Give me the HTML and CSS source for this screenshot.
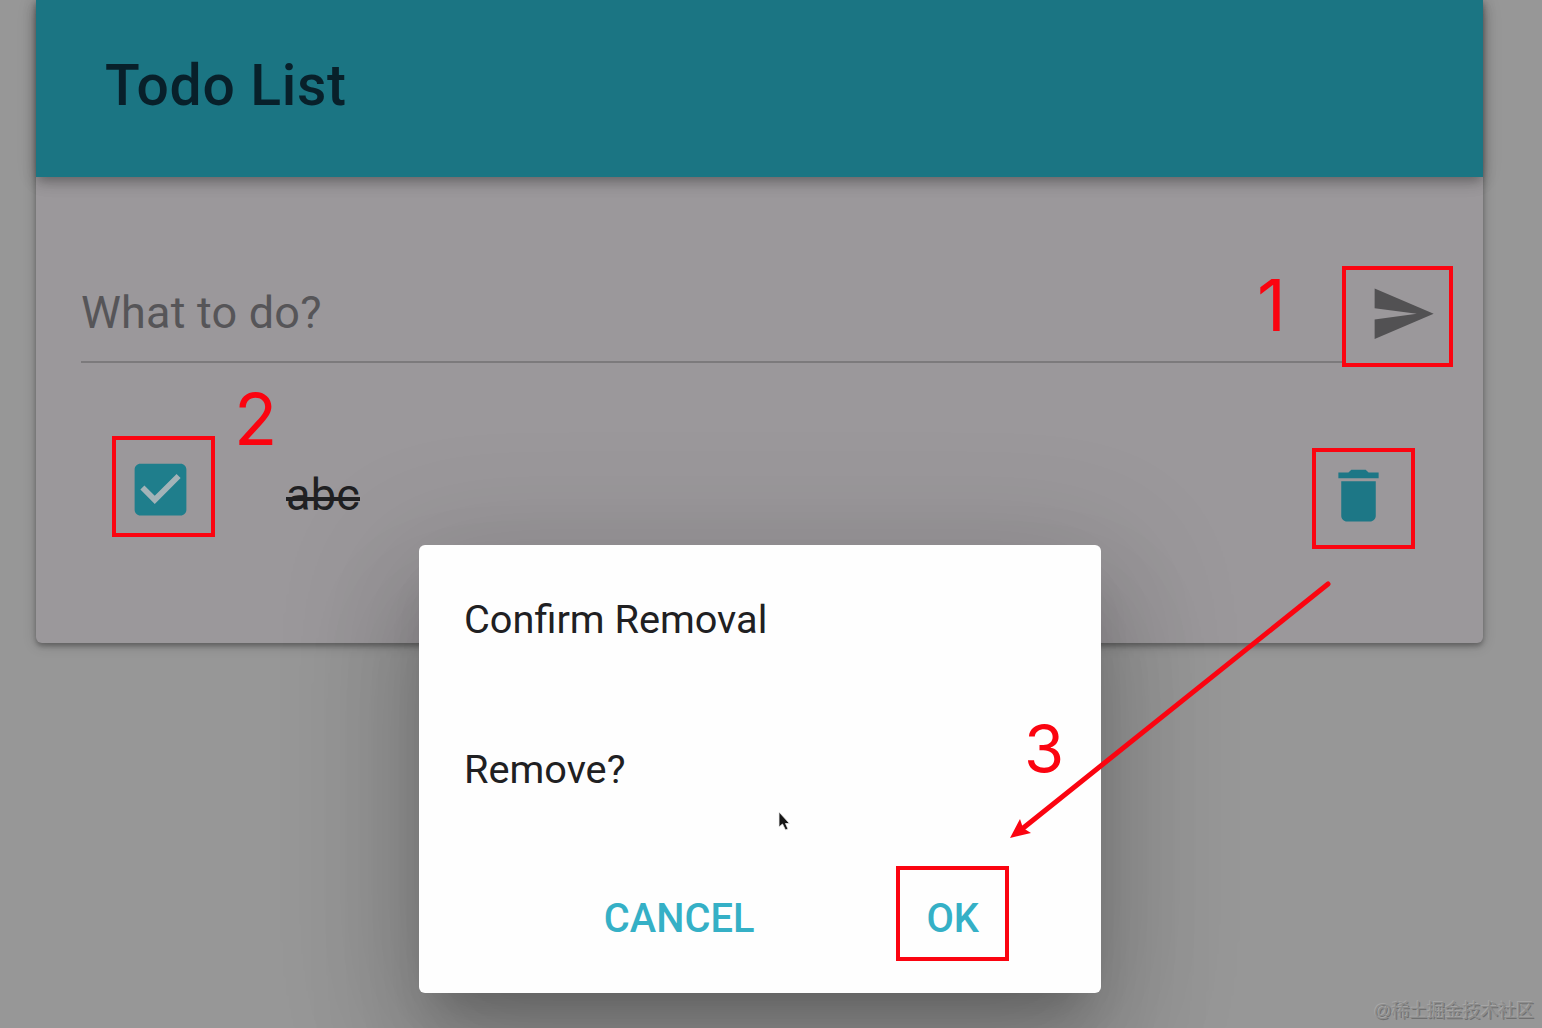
FILE: index.html
```html
<!DOCTYPE html>
<html lang="en">
<head>
    <meta charset="UTF-8">
    <meta name="viewport" content="width=device-width, initial-scale=1.0">
    <title>Todo List</title>
    <link rel="stylesheet" href="styles.css">
</head>
<body>
    <main class="card">
        <header class="toolbar">
            <h1>Todo List</h1>
        </header>

        <form class="new-todo">
            <div class="field">
                <span class="placeholder">What to do?</span>
            </div>
            <svg class="send" viewBox="0 0 24 24"><path d="M2.01 21L23 12 2.01 3 2 10l15 2-15 2z"/></svg>
        </form>

        <ul class="todos">
            <li class="todo">
                <svg class="check" viewBox="0 0 24 24">
                    <path class="tick" d="M4 5h16v13H4z"/>
                    <path d="M19 3H5c-1.11 0-2 .9-2 2v14c0 1.1.89 2 2 2h14c1.11 0 2-.9 2-2V5c0-1.1-.89-2-2-2zm-9 14l-5-5 1.41-1.41L10 14.17l7.59-7.59L19 8l-9 9z"/>
                </svg>
                <span class="todo-text">abc</span>
                <svg class="delete" viewBox="0 0 24 24"><path d="M6 19c0 1.1.9 2 2 2h8c1.1 0 2-.9 2-2V7H6v12zM19 4h-3.5l-1-1h-5l-1 1H5v2h14V4z"/></svg>
            </li>
        </ul>
    </main>

    <div class="dialog">
        <h2>Confirm Removal</h2>
        <p>Remove?</p>
        <div class="actions">
            <button class="btn" type="button">CANCEL</button>
            <button class="btn" type="button">OK</button>
        </div>
    </div>

    <!-- step markers on top of the app -->
    <svg class="steps" viewBox="0 0 1542 1028">
        <rect x="1344" y="268" width="107" height="97"/>
        <rect x="114" y="438" width="99" height="97"/>
        <rect x="1314" y="450" width="99" height="97"/>
        <rect x="898" y="868" width="109" height="91"/>
        <path class="line" d="M1328 584L1022 829"/>
        <path class="head" d="M1010 838L1020 819 1023 828 1031 833z"/>
        <text x="1257" y="331" font-size="71">1</text>
        <text x="234" y="445" font-size="71">2</text>
        <text x="1024" y="772" font-size="65">3</text>
        <path class="cursor" d="M779 812V827L782.5 824 785.5 830 788 829 785.5 823.5H789.5z"/>
    </svg>

    <span class="watermark">@稀土掘金技术社区</span>
</body>
</html>
```
FILE: styles.css
```css
body {
    font-family: Roboto, sans-serif;
    margin: 0;
    height: 1028px;
    overflow: hidden;
    position: relative;
    background-color: #979797;
    color: #202022;
}
h1, h2, p, ul {
    margin: 0;
    padding: 0;
    font-weight: 400;
}
.card {
    width: 1447px;
    height: 643px;
    margin-left: 36px;
    background-color: #9b989b;
    border-radius: 0 0 6px 6px;
    box-shadow: 0 3px 5px rgba(0, 0, 0, 0.28), 0 2px 14px rgba(0, 0, 0, 0.18);
}
.toolbar {
    height: 177px;
    display: flex;
    align-items: center;
    padding-left: 69px;
    box-sizing: border-box;
    background-color: #1b7583;
    box-shadow: 0 5px 10px -2px rgba(0, 0, 0, 0.22), 0 7px 14px rgba(0, 0, 0, 0.1), 0 2px 20px rgba(0, 0, 0, 0.1);
}
.toolbar h1 {
    font-size: 57px;
    font-weight: 500;
    line-height: 60px;
    letter-spacing: 0.7px;
    color: #08202a;
    margin-top: -5px;
}
.new-todo {
    display: flex;
    align-items: center;
    padding: 87px 45px 0;
}
.field {
    flex: 1;
    height: 97px;
    display: flex;
    align-items: center;
    border-bottom: 2px solid #7c7a7c;
}
.placeholder {
    font-size: 45px;
    letter-spacing: 0.2px;
    color: #565558;
}
.send {
    width: 67.5px;
    height: 67.5px;
    margin: 0 2px 0 26px;
    fill: #525153;
}
.todos {
    list-style: none;
    padding: 82px 90px 0;
}
.todo {
    height: 100px;
    display: flex;
    align-items: center;
}
.check {
    width: 69px;
    height: 69px;
    margin: -11px 0 0 0;
    fill: #1f7e8c;
}
.check .tick {
    fill: #a3b3b8;
}
.todo-text {
    position: relative;
    margin: -2px auto 0 91px;
    font-size: 45px;
    line-height: 53px;
    letter-spacing: 0.3px;
}
/* strike-through for a finished todo */
.todo-text::after {
    content: "";
    position: absolute;
    left: 0;
    right: 0;
    top: 29px;
    height: 4px;
    background-color: #202022;
}
.delete {
    width: 69px;
    height: 69px;
    fill: #1d7786;
}
.dialog {
    position: absolute;
    left: 419px;
    top: 545px;
    width: 682px;
    height: 448px;
    box-sizing: border-box;
    padding: 51px 122px 0 45px;
    background-color: #fefefe;
    border-radius: 6px;
    box-shadow: 0 31px 43px -20px rgba(0, 0, 0, 0.2), 0 68px 108px 9px rgba(0, 0, 0, 0.14), 0 26px 131px 23px rgba(0, 0, 0, 0.12);
}
.dialog h2,
.dialog p {
    font-size: 39.7px;
    line-height: 48px;
}
.dialog p {
    margin-top: 102px;
}
.actions {
    display: flex;
    justify-content: flex-end;
    gap: 172px;
    margin-top: 101px;
}
.btn {
    padding: 0;
    border: 0;
    background: none;
    font-family: inherit;
    font-size: 39.8px;
    font-weight: 500;
    line-height: 48px;
    color: #35b0c6;
}
.steps {
    position: absolute;
    left: 0;
    top: 0;
    width: 1542px;
    height: 1028px;
    font-family: Inter, sans-serif;
    fill: #fb0410;
}
.steps rect,
.steps .line {
    fill: none;
    stroke: #fb0410;
    stroke-width: 4;
}
.steps .line {
    stroke-width: 5;
    stroke-linecap: round;
}
.steps .cursor {
    fill: #151515;
    stroke: #eee;
    stroke-width: 0.8;
}
.watermark {
    position: absolute;
    right: 8px;
    bottom: 5px;
    font-family: "Liberation Sans", "Noto Sans CJK SC", sans-serif;
    font-size: 17.8px;
    line-height: 24px;
    color: #8c8c8c;
    text-shadow: -1px -1px 0 #a6a6a6, 1px 1px 0 #707070;
}
```
